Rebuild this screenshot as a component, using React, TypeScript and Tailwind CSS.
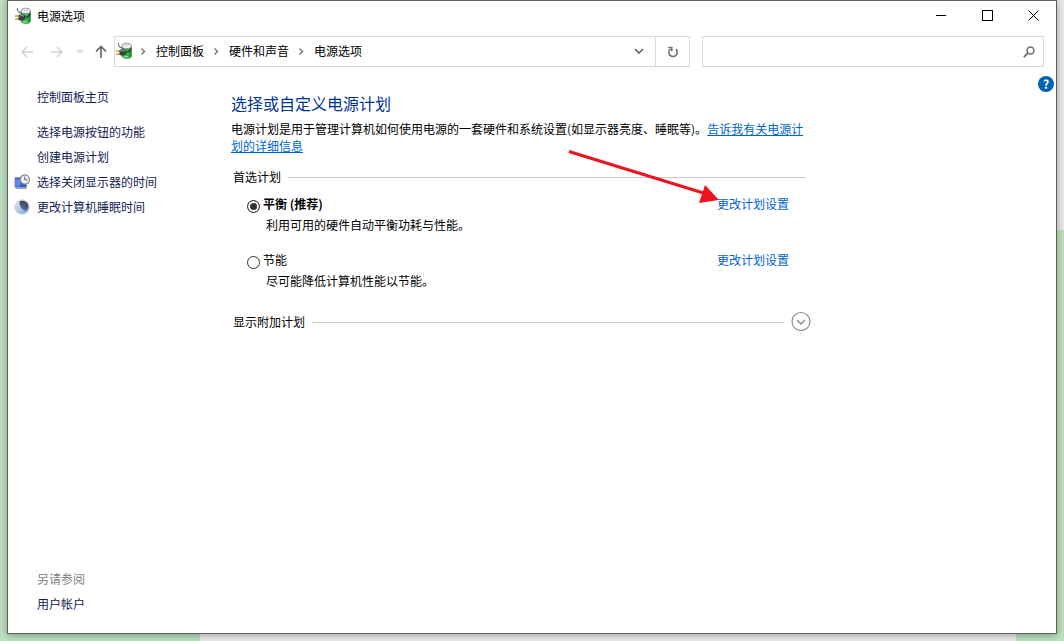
import { useState } from 'react'
import type { ReactNode } from 'react'

type Plan = {
  id: string
  name: string
  description: string
}

type Task = {
  label: string
  icon?: ReactNode
}

const crumbs = ['控制面板', '硬件和声音', '电源选项']

const plans: Plan[] = [
  { id: 'balanced', name: '平衡 (推荐)', description: '利用可用的硬件自动平衡功耗与性能。' },
  { id: 'saver', name: '节能', description: '尽可能降低计算机性能以节能。' },
]

const tasks: Task[] = [
  { label: '选择电源按钮的功能' },
  { label: '创建电源计划' },
  { label: '选择关闭显示器的时间', icon: <DisplayClockIcon /> },
  { label: '更改计算机睡眠时间', icon: <SleepIcon /> },
]

function PowerIcon() {
  return (
    <svg width="17" height="17" viewBox="0 0 17 17" fill="none" className="shrink-0">
      <path d="M6 4.500h9.500v9.500c0 1.500-1.500 2.500-4.500 2.500S6 15.500 6 14z" fill="#2fb84a" stroke="#3f7a4b" strokeWidth=".6" />
      <path d="M14 5.500v9.500" stroke="#178a33" strokeWidth="1.600" />
      <path d="M8 14.800h4" stroke="#84e88f" strokeWidth="1.400" />
      <ellipse cx="10.700" cy="4" rx="4.700" ry="2.700" fill="#edf2f4" stroke="#77818a" strokeWidth=".8" />
      <ellipse cx="10.500" cy="2.200" rx="2.200" ry="1" fill="#fff" stroke="#8f99a2" strokeWidth=".6" />
      <path d="M2.500.8C2 3 3.500 5.200 6 6" stroke="#6c7277" strokeWidth="1.100" />
      <path d="M0 9h4M0 12.300h4" stroke="#c9a322" strokeWidth="1.500" />
      <path d="M3.500 8 6.500 7l3.300 1.200L11 10l-1.300 2.500-3.200 1.200-3-.7z" fill="#3b3f42" />
      <path d="m4.500 9.200 2.300-.8 2.200.8" stroke="#a8afb3" />
      <path d="M10.500 10c2.500 0 4-1.500 4.800-3.500" stroke="#2c3b30" strokeWidth="1.200" />
    </svg>
  )
}

function DisplayClockIcon() {
  return (
    <svg width="16" height="16" viewBox="0 0 16 16" fill="none">
      <path d="M1 3.500h11.500v10H1z" fill="#3159cf" stroke="#8da2c9" />
      <path d="M2 5h4.500v7.500H2z" fill="#6286e5" />
      <path d="M2 14.500h10.500" stroke="#98a1ad" />
      <circle cx="10.800" cy="5.500" r="4.600" fill="#eef2f4" stroke="#7d858c" strokeWidth="1.200" />
      <path d="M10.800 2.500v3.300h2.600" stroke="#59636e" />
    </svg>
  )
}

function SleepIcon() {
  return (
    <svg width="16" height="16" viewBox="0 0 16 16" fill="none">
      <defs>
        <linearGradient id="moon" x1="2" y1="2" x2="12" y2="15" gradientUnits="userSpaceOnUse">
          <stop stopColor="#dfe2e6" />
          <stop offset=".6" stopColor="#b4c6e4" />
          <stop offset="1" stopColor="#7ba3dc" />
        </linearGradient>
        <linearGradient id="night" x1="11" y1="3" x2="7" y2="12" gradientUnits="userSpaceOnUse">
          <stop stopColor="#3b4353" />
          <stop offset="1" stopColor="#5b7dbb" />
        </linearGradient>
      </defs>
      <circle cx="8" cy="8" r="7.300" fill="url(#moon)" stroke="#cdd2d9" strokeWidth=".8" />
      <path d="M5.500 2.500C8.500 1 12.500 2.200 14 5.500c1 3-.2 5-2 6.500-3.500-.8-7-4-6.500-9.500z" fill="url(#night)" />
    </svg>
  )
}

function Crumb({ label }: { label: string }) {
  return (
    <>
      <svg width="25" height="10" viewBox="0 0 25 10" fill="none" className="shrink-0">
        <path d="m10.500 2.500 3 3-3 3" stroke="#707070" strokeWidth="1.400" />
      </svg>
      <a href="#" className="whitespace-nowrap">
        {label}
      </a>
    </>
  )
}

function TitleBar() {
  return (
    <header className="flex h-7 items-center pl-[7px]">
      <PowerIcon />
      <h1 className="ml-[5px]">电源选项</h1>
      <div className="ml-auto flex self-stretch">
        <button type="button" aria-label="最小化" className="grid w-[46px] place-items-center">
          <svg width="11" height="11" stroke="#000" shapeRendering="crispEdges">
            <path d="M0 5.500h10" />
          </svg>
        </button>
        <button type="button" aria-label="最大化" className="grid w-[46px] place-items-center">
          <svg width="11" height="11" fill="none" stroke="#000" shapeRendering="crispEdges">
            <path d="M.5.5h10v10h-10z" />
          </svg>
        </button>
        <button type="button" aria-label="关闭" className="grid w-[46px] place-items-center">
          <svg width="11" height="11" stroke="#000">
            <path d="m.5.5 10 10m0-10-10 10" />
          </svg>
        </button>
      </div>
    </header>
  )
}

function NavBar() {
  return (
    <nav className="mt-[7px] flex h-[31px] pr-3 pl-1">
      <button type="button" aria-label="后退" className="grid w-[30px] place-items-center">
        <svg width="12" height="12" fill="none" stroke="#cfcfcf" strokeWidth="1.300">
          <path d="M12 6H1m5-5L1 6l5 5" />
        </svg>
      </button>
      <button type="button" aria-label="前进" className="grid w-[30px] place-items-center">
        <svg width="12" height="12" fill="none" stroke="#cfcfcf" strokeWidth="1.300">
          <path d="M0 6h11M6 1l5 5-5 5" />
        </svg>
      </button>
      <button type="button" aria-label="最近浏览的位置" className="grid w-4 place-items-center">
        <svg width="6" height="5" fill="none" stroke="#c8c8c8" strokeWidth="1.200">
          <path d="m.5 1 2.500 2.500L5.500 1" />
        </svg>
      </button>
      <button type="button" aria-label="上移" className="grid w-[26px] place-items-center">
        <svg width="12" height="13" fill="none" stroke="#666" strokeWidth="1.600">
          <path d="M6 13V1.500M1 6.500l5-5 5 5" />
        </svg>
      </button>

      <div className="flex flex-[574] border border-[#d9d9d9]">
        <div className="flex flex-1 items-center pb-0.5 pl-px">
          <PowerIcon />
          <div className="-ml-0.5 flex items-center">
            {crumbs.map((label) => (
              <Crumb key={label} label={label} />
            ))}
          </div>
        </div>
        <button type="button" aria-label="以前的位置" className="grid w-8 place-items-center">
          <svg width="10" height="7" fill="none" stroke="#666" strokeWidth="1.700">
            <path d="m1 1 4 4 4-4" />
          </svg>
        </button>
        <button
          type="button"
          aria-label="刷新"
          className="grid w-[34px] place-items-center border-l border-[#d9d9d9]"
        >
          <svg width="12" height="12" fill="none" stroke="#707070" strokeWidth="1.600">
            <path d="M3.500 3A4.200 4.200 0 1 0 8.800 3.200" />
            <path d="M1.200 1.500h3.600v3.800" />
          </svg>
        </button>
      </div>

      <label className="ml-3 flex flex-[332] items-center border border-[#d9d9d9] pr-2">
        <input type="search" aria-label="搜索控制面板" className="min-w-0 flex-1 px-2 outline-none" />
        <svg width="12" height="12" fill="none" stroke="#707070" strokeWidth="1.500">
          <circle cx="7.500" cy="4.500" r="3.500" />
          <path d="M5 7 .8 11.200" strokeWidth="1.800" />
        </svg>
      </label>
    </nav>
  )
}

function Sidebar() {
  return (
    <aside className="flex w-[223px] shrink-0 flex-col pt-[17px] pb-[17px] leading-[25px] text-[#151c55]">
      <a href="#" className="ml-[29px]">
        控制面板主页
      </a>
      <ul className="mt-[10px]">
        {tasks.map((task) => (
          <li key={task.label} className="flex items-center gap-[7px] pl-[6px]">
            <span className="w-4">{task.icon}</span>
            <a href="#">{task.label}</a>
          </li>
        ))}
      </ul>
      <div className="mt-auto ml-[29px]">
        <h2 className="text-[#808080]">另请参阅</h2>
        <a href="#">用户帐户</a>
      </div>
    </aside>
  )
}

function PlanOption({
  plan,
  checked,
  onSelect,
}: {
  plan: Plan
  checked: boolean
  onSelect: () => void
}) {
  return (
    <div className="flex items-start justify-between pr-[22px] pl-4">
      <div>
        <div className="flex items-start gap-[3px]">
          <input
            type="radio"
            name="plan"
            id={plan.id}
            checked={checked}
            onChange={onSelect}
            className="mt-[5px] size-[13px] appearance-none rounded-full border border-[#333] bg-white checked:bg-[#333] checked:shadow-[inset_0_0_0_2px_#fff]"
          />
          <label htmlFor={plan.id} className={checked ? 'font-bold' : ''}>
            {plan.name}
          </label>
        </div>
        <p className="mt-[3px] ml-[19px]">{plan.description}</p>
      </div>
      <a href="#" className="text-[#0066cc]">
        更改计划设置
      </a>
    </div>
  )
}

function PlanSettings() {
  const [selected, setSelected] = useState('balanced')

  return (
    <main className="relative max-w-[580px] flex-1 pt-6">
      <h2 className="text-base leading-6 text-[#003399]">选择或自定义电源计划</h2>
      <p className="mt-[5px]">
        电源计划是用于管理计算机如何使用电源的一套硬件和系统设置(如显示器亮度、睡眠等)。
        <a href="#" className="text-[#0066cc] underline">
          告诉我有关电源计划的详细信息
        </a>
      </p>

      <div className="mt-[14px] mr-[5px] ml-0.5 flex items-center gap-[7px]">
        <h3>首选计划</h3>
        <div className="mt-0.5 h-px flex-1 bg-[#c8c8c8]" />
      </div>
      <div className="mt-[10px] space-y-[18px]">
        {plans.map((plan) => (
          <PlanOption
            key={plan.id}
            plan={plan}
            checked={plan.id === selected}
            onSelect={() => setSelected(plan.id)}
          />
        ))}
      </div>

      <div className="mt-[22px] ml-0.5 flex items-center gap-[7px]">
        <h3>显示附加计划</h3>
        <div className="mt-0.5 h-px flex-1 bg-[#c8c8c8]" />
        <button type="button" aria-label="显示附加计划">
          <svg width="20" height="20" fill="none" stroke="#8c8c8c">
            <circle cx="10" cy="10.500" r="9" strokeWidth="1.200" />
            <path d="m6 9 4 4 4-4" strokeWidth="1.500" />
          </svg>
        </button>
      </div>

      {/* pointer to the plan's settings link */}
      <svg
        width="152"
        height="56"
        className="pointer-events-none absolute top-[82px] left-[337px]"
      >
        <path d="m1 2.500 136 42" stroke="#ee1320" strokeWidth="3" />
        <path d="m137 36 14 15-20 3z" fill="#ee1320" />
      </svg>
    </main>
  )
}

export default function App() {
  return (
    <div className="flex min-h-screen flex-col bg-[#bde2c1] font-['Noto_Sans_CJK_SC',sans-serif] text-xs leading-[17px] text-black">
      <div className="flex flex-1">
        <div className="w-[7px]" />
        <div className="relative z-10 flex min-w-0 flex-1 flex-col border border-[#5f5f5f] bg-white shadow-[0_1px_8px_rgba(0,0,0,0.35)]">
          <TitleBar />
          <NavBar />
          <div className="flex flex-1">
            <Sidebar />
            <PlanSettings />
            <button
              type="button"
              aria-label="帮助"
              className="mt-[9px] mr-[2px] ml-auto size-4 shrink-0 rounded-full bg-[#0063b8] text-center text-xs leading-4 font-bold text-white"
            >
              ?
            </button>
          </div>
        </div>
        <div className="flex w-[7px] flex-col">
          <div className="h-[230px] bg-[#eceaec]" />
        </div>
      </div>
      <div className="flex h-[7px]">
        <div className="w-[200px]" />
        <div className="mr-12 flex-1 bg-[#ebebeb]" />
      </div>
    </div>
  )
}
